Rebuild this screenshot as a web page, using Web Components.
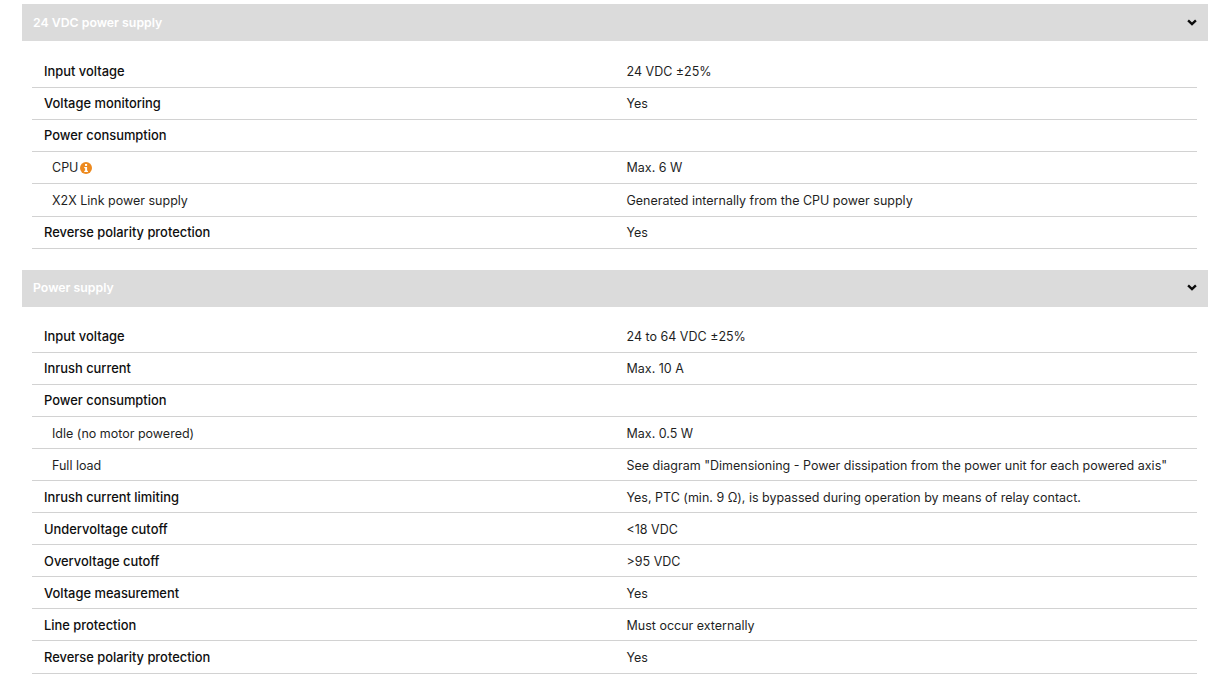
<!DOCTYPE html>
<html><head><meta charset="utf-8"><style>
html,body{margin:0;padding:0;background:#fff}
body{font-family:"Inter","Liberation Sans",sans-serif;font-size:12.5px;color:#1f1f1f;overflow:hidden}
#page{padding:4px 7px 0 22px;display:flex;flex-direction:column;gap:21.2px}
</style></head><body>
<template id="sec-t"><style>
:host{display:block}
.h{height:37px;box-sizing:border-box;padding:0 11px var(--hpb,1px);background:#dbdbdb;display:flex;align-items:center;justify-content:space-between;color:#fff;font-weight:600;font-size:12.3px}
.h svg{display:block}
.b{padding:var(--pad,15.05px) 11px 0 10px}
</style><div class="h"><span><slot name="title"></slot></span><svg width="10" height="7" viewBox="0 0 10 7"><path d="M1.1 1.3 5 5 8.9 1.3" fill="none" stroke="#0c0c0c" stroke-width="2.4"/></svg></div><div class="b"><slot></slot></div></template>
<template id="row-t"><style>
:host{display:grid;grid-template-columns:1fr 1fr;height:32.12px;box-sizing:border-box;padding-top:var(--top,8.06px);border-bottom:1px solid #d2d2d2;align-items:baseline;font-size:12.5px;color:#1f1f1f}
.l{padding-left:12px;font-size:12.9px;font-weight:500;color:#0f0f0f;display:flex;align-items:center;gap:2px}
:host([sub]) .l{padding-left:20px;font-size:12.5px;font-weight:400;color:#1f1f1f}
.v{padding-left:12px}
</style><div class="l"><slot name="label"></slot></div><div class="v"><slot></slot></div></template>
<template id="info-t"><style>:host{display:inline-flex}</style><svg width="12" height="12" viewBox="0 0 11 11"><circle cx="5.5" cy="5.5" r="5.5" fill="#ed8a1f"/><rect x="4.6" y="1.8" width="1.9" height="1.8" fill="#fff"/><path d="M3.9 4.6H6.5V8H7.3V9.2H3.9V8H4.7V5.7H3.9Z" fill="#fff"/></svg></template>
<div id="page">
<spec-section><span slot="title">24 VDC power supply</span>
<spec-row><span slot="label">Input voltage</span>24 VDC ±25%</spec-row>
<spec-row><span slot="label">Voltage monitoring</span>Yes</spec-row>
<spec-row><span slot="label">Power consumption</span></spec-row>
<spec-row sub><span slot="label">CPU</span><info-icon slot="label"></info-icon>Max. 6 W</spec-row>
<spec-row sub><span slot="label">X2X Link power supply</span>Generated internally from the CPU power supply</spec-row>
<spec-row><span slot="label">Reverse polarity protection</span>Yes</spec-row>
</spec-section>
<spec-section style="--pad:13.51px;--hpb:2px;--top:8.85px"><span slot="title">Power supply</span>
<spec-row><span slot="label">Input voltage</span>24 to 64 VDC ±25%</spec-row>
<spec-row><span slot="label">Inrush current</span>Max. 10 A</spec-row>
<spec-row><span slot="label">Power consumption</span></spec-row>
<spec-row sub><span slot="label">Idle (no motor powered)</span>Max. 0.5 W</spec-row>
<spec-row sub><span slot="label">Full load</span>See diagram "Dimensioning - Power dissipation from the power unit for each powered axis"</spec-row>
<spec-row><span slot="label">Inrush current limiting</span>Yes, PTC (min. 9 Ω), is bypassed during operation by means of relay contact.</spec-row>
<spec-row><span slot="label">Undervoltage cutoff</span>&lt;18 VDC</spec-row>
<spec-row><span slot="label">Overvoltage cutoff</span>&gt;95 VDC</spec-row>
<spec-row><span slot="label">Voltage measurement</span>Yes</spec-row>
<spec-row><span slot="label">Line protection</span>Must occur externally</spec-row>
<spec-row><span slot="label">Reverse polarity protection</span>Yes</spec-row>
</spec-section>
</div>
<script>
for (const [tag,id] of [['spec-section','sec-t'],['spec-row','row-t'],['info-icon','info-t']]) {
  customElements.define(tag, class extends HTMLElement {
    constructor(){super();this.attachShadow({mode:'open'}).appendChild(document.getElementById(id).content.cloneNode(true));}
  });
}
</script>
</body></html>
